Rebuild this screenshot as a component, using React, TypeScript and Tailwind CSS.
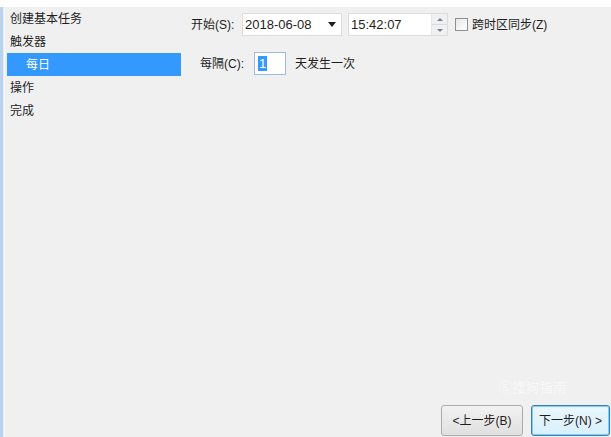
import * as React from 'react';

const font = { fontFamily: '"Liberation Sans", "Noto Sans CJK SC", sans-serif' };

const NavItem: React.FC<{ label: string; selected?: boolean; indent?: boolean }> = ({ label, selected, indent }) => (
  <div
    className={
      'h-[23px] flex items-center text-[12px] ' +
      (selected ? 'bg-[#3399ff] text-white' : 'text-[#1e1e1e]') +
      (indent ? ' pl-[19px]' : ' pl-[3px]')
    }
  >
    {label}
  </div>
);

const App: React.FC = () => {
  return (
    <div className="w-[611px] h-[437px] bg-white flex flex-col overflow-hidden" style={font}>
      <div className="h-[7px] bg-white" />
      <div className="flex-1 flex bg-[#f0f0f0]">
        {/* left frame edge */}
        <div className="w-[3px] bg-[#b9d3ee]" />
        <div className="w-[1px] bg-[#e4ecf5]" />
        <div className="w-[1px] bg-[#f5f8fb]" />

        {/* wizard step list */}
        <div className="w-[176px] pl-[2px] flex flex-col">
          <NavItem label="创建基本任务" />
          <NavItem label="触发器" />
          <NavItem label="每日" selected indent />
          <NavItem label="操作" />
          <NavItem label="完成" />
        </div>

        {/* page content */}
        <div className="flex-1 flex flex-col pl-[10px] text-[12px] text-[#1e1e1e]">
          <div className="flex items-center h-[23px] mt-[6px]">
            <span className="w-[51px]">开始(S):</span>
            <div className="w-[100px] h-[23px] bg-white border border-[#dcdcdc] flex items-center pl-[2px] pr-[5px]">
              <span className="flex-1 text-[13px]">2018-06-08</span>
              <svg width="8" height="5" viewBox="0 0 8 5"><path d="M0 0h8L4 5z" fill="#1e1e1e" /></svg>
            </div>
            <div className="w-[100px] h-[23px] ml-[6px] bg-white border border-[#dcdcdc] flex items-center pl-[2px]">
              <span className="flex-1 text-[13px]">15:42:07</span>
              <div className="w-[16px] h-[21px] flex flex-col border-l border-[#e4e4e4]">
                <div className="flex-1 bg-[#eef0f2] border-b border-[#d8dce0] flex items-center justify-center">
                  <svg width="6" height="3" viewBox="0 0 6 3"><path d="M0 3L3 0l3 3z" fill="#7a8290" /></svg>
                </div>
                <div className="flex-1 bg-[#eef0f2] flex items-center justify-center">
                  <svg width="6" height="3" viewBox="0 0 6 3"><path d="M0 0h6L3 3z" fill="#7a8290" /></svg>
                </div>
              </div>
            </div>
            <div className="ml-[7px] w-[13px] h-[13px] border border-[#8f8f8f] bg-gradient-to-br from-[#e8e8e8] to-white" />
            <span className="ml-[4px] text-[12px]">跨时区同步(Z)</span>
          </div>

          <div className="flex items-center h-[23px] mt-[16px] pl-[9px]">
            <span className="w-[54px]">每隔(C):</span>
            <div className="w-[32px] h-[23px] bg-white border border-[#9dbbdc] flex items-center pl-[3px]">
              <span className="bg-[#3399ff] text-white text-[13px] leading-[15px] px-[1px]">1</span>
            </div>
            <span className="ml-[9px]">天发生一次</span>
          </div>

          <div className="flex-1" />

          <div className="flex justify-end gap-[8px] pb-[1px] pr-[1px] relative">
            <span className="absolute right-[44px] top-[-27px] text-[13px] text-white/60 tracking-wider">Ⓢ搜狗指南</span>
            <button className="w-[82px] h-[31px] rounded-[3px] border border-[#acacac] bg-gradient-to-b from-[#f2f2f2] to-[#e0e0e0] text-[12px] text-[#1e1e1e]">
              &lt;上一步(B)
            </button>
            <button className="w-[79px] h-[31px] rounded-[3px] border border-[#3c7fb1] shadow-[inset_0_0_0_1px_#7ecff7] bg-gradient-to-b from-[#eaf6fd] to-[#d9f0fc] text-[12px] text-[#1e1e1e]">
              下一步(N) &gt;
            </button>
          </div>
        </div>
      </div>
    </div>
  );
};

export default App;
